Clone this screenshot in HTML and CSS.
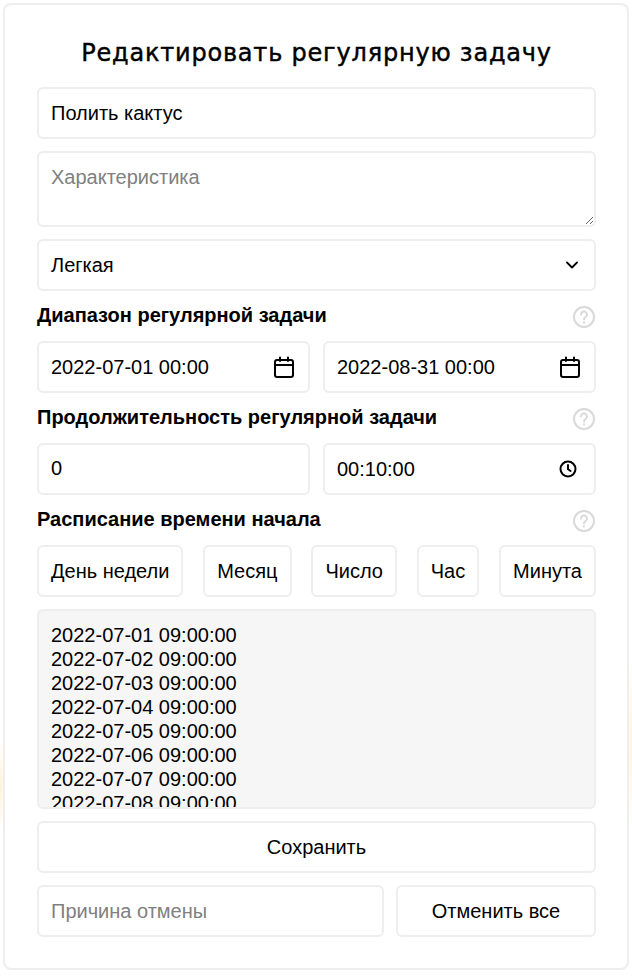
FILE: index.html
```html
<!DOCTYPE html>
<html lang="ru">
<head>
<meta charset="utf-8">
<title>Редактировать регулярную задачу</title>
<link rel="stylesheet" href="styles.css">
</head>
<body>
<main class="card">
  <h1 class="title">Редактировать регулярную задачу</h1>
  <input class="field" type="text" value="Полить кактус">
  <textarea class="field area" placeholder="Характеристика"></textarea>
  <div class="field with-icon">
    <span class="grow">Легкая</span>
    <svg class="chev" width="16" height="16" viewBox="0 0 16 16" fill="none" stroke="#000" stroke-width="1.8" stroke-linecap="round" stroke-linejoin="round"><path d="M3 5.5l5 5 5-5"/></svg>
  </div>

  <div class="label-row">
    <span class="label">Диапазон регулярной задачи</span>
    <svg class="help" width="24" height="24" viewBox="0 0 24 24" fill="none" stroke="#d9d9d9"><circle cx="12" cy="12" r="10" stroke-width="2"/><path d="M9 9.5a3 3 0 1 1 4.6 2.5c-1 .7-1.6 1.2-1.6 2.4" stroke-width="2" stroke-linecap="round"/><circle cx="12" cy="17.4" r="1.1" fill="#d9d9d9" stroke="none"/></svg>
  </div>
  <div class="two">
    <div class="field with-icon">
      <span class="grow">2022-07-01 00:00</span>
      <svg width="24" height="24" viewBox="0 0 24 24" fill="none" stroke="#000" stroke-width="2" stroke-linecap="round" stroke-linejoin="round"><rect x="3" y="5" width="18" height="17" rx="2"/><path d="M3 10h18M8 2.5V6M16 2.5V6"/></svg>
    </div>
    <div class="field with-icon">
      <span class="grow">2022-08-31 00:00</span>
      <svg width="24" height="24" viewBox="0 0 24 24" fill="none" stroke="#000" stroke-width="2" stroke-linecap="round" stroke-linejoin="round"><rect x="3" y="5" width="18" height="17" rx="2"/><path d="M3 10h18M8 2.5V6M16 2.5V6"/></svg>
    </div>
  </div>

  <div class="label-row">
    <span class="label">Продолжительность регулярной задачи</span>
    <svg class="help" width="24" height="24" viewBox="0 0 24 24" fill="none" stroke="#d9d9d9"><circle cx="12" cy="12" r="10" stroke-width="2"/><path d="M9 9.5a3 3 0 1 1 4.6 2.5c-1 .7-1.6 1.2-1.6 2.4" stroke-width="2" stroke-linecap="round"/><circle cx="12" cy="17.4" r="1.1" fill="#d9d9d9" stroke="none"/></svg>
  </div>
  <div class="two">
    <div class="field with-icon num"><span class="grow">0</span></div>
    <div class="field with-icon">
      <span class="grow">00:10:00</span>
      <svg class="clock" width="18" height="18" viewBox="0 0 18 18" fill="none" stroke="#000" stroke-width="2" stroke-linecap="round" stroke-linejoin="round"><circle cx="9" cy="9" r="7.5"/><path d="M9 5v4.2l2.6 1.8"/></svg>
    </div>
  </div>

  <div class="label-row">
    <span class="label">Расписание времени начала</span>
    <svg class="help" width="24" height="24" viewBox="0 0 24 24" fill="none" stroke="#d9d9d9"><circle cx="12" cy="12" r="10" stroke-width="2"/><path d="M9 9.5a3 3 0 1 1 4.6 2.5c-1 .7-1.6 1.2-1.6 2.4" stroke-width="2" stroke-linecap="round"/><circle cx="12" cy="17.4" r="1.1" fill="#d9d9d9" stroke="none"/></svg>
  </div>
  <div class="units">
    <button class="btn">День недели</button>
    <button class="btn">Месяц</button>
    <button class="btn">Число</button>
    <button class="btn">Час</button>
    <button class="btn">Минута</button>
  </div>

  <div class="preview">2022-07-01 09:00:00
2022-07-02 09:00:00
2022-07-03 09:00:00
2022-07-04 09:00:00
2022-07-05 09:00:00
2022-07-06 09:00:00
2022-07-07 09:00:00
2022-07-08 09:00:00</div>

  <button class="btn wide">Сохранить</button>
  <div class="cancel-row">
    <input class="field cancel-input" type="text" placeholder="Причина отмены">
    <button class="btn cancel-btn">Отменить все</button>
  </div>
</main>
</body>
</html>
```
FILE: styles.css
```css
* { box-sizing: border-box; }
html, body { margin: 0; padding: 0; }
body {
  width: 632px;
  height: 976px;
  overflow: hidden;
  background:
    radial-gradient(ellipse 10px 45px at 0 785px, #fdf3da, transparent),
    radial-gradient(ellipse 6px 90px at 632px 745px, #fdf3da, transparent),
    #fff;
  font-family: "Liberation Sans", Arial, sans-serif;
  font-size: 20px;
  color: #000;
  padding: 3px 3px 0;
}
.card {
  width: 626px;
  height: 967px;
  border: 2px solid #eee;
  border-radius: 8px;
  background: #fff;
  padding: 31px 31px 0 32px;
  display: flex;
  flex-direction: column;
}
.title {
  margin: 0 0 17px;
  height: 34px;
  font: 400 24px/34px "DejaVu Sans", sans-serif;
  -webkit-text-stroke: 0.45px #000;
  letter-spacing: 0.8px;
  text-align: center;
  white-space: nowrap;
  color: #000;
}
.field {
  display: block;
  width: 100%;
  height: 52px;
  border: 2px solid #eee;
  border-radius: 6px;
  background: #fff;
  padding: 0 12px;
  font: 20px/24px "Liberation Sans", Arial, sans-serif;
  color: #000;
  margin: 0 0 12px;
  outline: none;
  flex: none;
}
.field::placeholder { color: #808080; opacity: 1; }
.area { height: 76px; padding: 12px; resize: vertical; }
.with-icon { display: flex; align-items: center; }
.grow { flex: 1; }
.chev { margin-right: 2px; }
.clock { margin-right: 5px; }
.num { padding-bottom: 2px; }
.label-row {
  display: flex;
  align-items: flex-start;
  justify-content: space-between;
  height: 26px;
  margin: 0 0 12px;
}
.label { font-size: 20px; font-weight: 700; line-height: 24px; }
.help { margin-top: 2px; }
.two { display: grid; grid-template-columns: 273px 273px; justify-content: space-between; }
.units { display: flex; justify-content: space-between; margin: 0 0 12px; }
.btn {
  height: 52px;
  border: 2px solid #eee;
  border-radius: 6px;
  background: #fff;
  padding: 0 12px;
  font: 20px/24px "Liberation Sans", Arial, sans-serif;
  color: #000;
  flex: none;
}
.preview {
  height: 200px;
  border: 2px solid #eee;
  border-radius: 6px;
  background: #f6f6f6;
  padding: 12px 12px 0;
  line-height: 24px;
  white-space: pre;
  overflow: hidden;
  margin: 0 0 12px;
  flex: none;
}
.wide { width: 100%; margin: 0 0 12px; }
.cancel-row { display: flex; gap: 12px; }
.cancel-input { flex: 1 1 0; min-width: 0; margin: 0; }
.cancel-btn { width: 200px; }
```
